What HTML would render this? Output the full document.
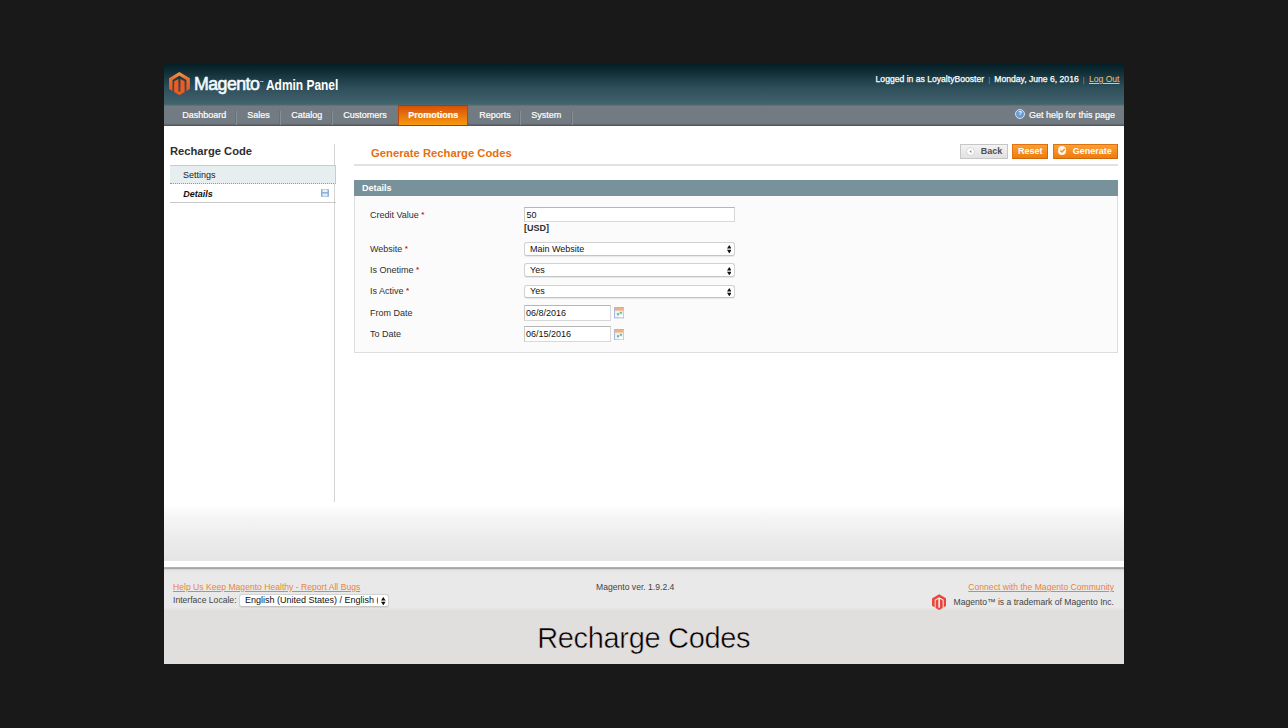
<!DOCTYPE html>
<html lang="en">
<head>
<meta charset="utf-8">
<title>Recharge Codes</title>
<style>
*{box-sizing:border-box;margin:0;padding:0}
html,body{width:1288px;height:728px;overflow:hidden;background:#191919}
body{font-family:"Liberation Sans",sans-serif;font-size:9px;color:#2f2f2f;position:relative}
.abs{position:absolute}
#panel{position:absolute;left:164px;top:65px;width:960px;height:599px;background:#fff}
#hdr{position:absolute;left:0;top:-1.3px;width:960px;height:42.3px;background:linear-gradient(#061f26 0%,#0c272f 12%,#1a3a43 32%,#2d4f5a 56%,#3a5965 78%,#3e636b 92%,#3d626a 100%)}
#nav{position:absolute;left:0;top:38.7px;width:960px;height:22px;background:linear-gradient(#3d626a 0,#727a82 2.3px,#727a82 19.3px,#6a7076 20px,#4b5054 22px)}
.t{position:absolute;white-space:nowrap;line-height:1}
.nv{color:#fff;font-size:9px;top:7.7px;-webkit-text-stroke:.2px #fff;margin-left:.3px}
.sep{position:absolute;top:7.3px;width:1px;height:14.5px;background:#868f96;box-shadow:-1px 0 0 #666f76}

.lb{color:#2f2f2f;font-size:9px}
.rq{color:#c41e2e;font-weight:bold;font-size:8px;position:relative;top:-1px}
.inp{background:#fff;border:1px solid #d8d8d8;border-top-color:#b6b6b6;border-left-color:#cccccc}
.sel{background:#fff;border:1px solid #d2d2d2;border-bottom-color:#c4c4c4;border-radius:3px;box-shadow:0 .5px .8px rgba(0,0,0,.08)}
</style>
</head>
<body>
<div id="panel">
  <div id="hdr"></div>
  <div class="abs" style="left:0;top:0;width:960px;height:41px">
    <svg class="abs" style="left:5.3px;top:7px" width="20.9" height="23.1" viewBox="0 0 20.9 23.1">
      <defs><linearGradient id="lg" x1="0" y1="0" x2="0" y2="1"><stop offset="0" stop-color="#f49a4c"/><stop offset=".35" stop-color="#ee6e2c"/><stop offset="1" stop-color="#ea5520"/></linearGradient></defs>
      <path d="M10.4 0 L20.9 6.2 V16.9 L17.4 18.9 V7.9 L10.4 3.8 L3.5 7.9 V18.9 L0 16.9 V6.2 Z" fill="url(#lg)"/>
      <path d="M5.1 9.3 L9.4 6.9 V19.3 L10.4 19.9 L11.4 19.3 V6.9 L15.6 9.3 V20.1 L10.4 23.1 L5.1 20.1 Z" fill="#ee5a1f"/>
    </svg>
    <div class="t" style="left:30.4px;top:9px;font-size:19px;color:#f4fbff;letter-spacing:-0.6px;transform:scaleX(.935);transform-origin:0 0;-webkit-text-stroke:.6px #f4fbff">Magento</div>
    <div class="t" style="left:95.7px;top:15.5px;font-size:2.5px;color:#fff;font-weight:bold">TM</div>
    <div class="t" style="left:102.1px;top:13px;font-size:14.3px;color:#fff;font-weight:bold;transform:scaleX(.835);transform-origin:0 0">Admin Panel</div>
    <div class="t" style="right:4.5px;top:10px;font-size:8.6px;color:#fff"><b style="font-weight:normal;-webkit-text-stroke:.25px #fff">Logged in as LoyaltyBooster</b><span style="color:#7f959f;padding:0 4px;font-size:7.5px;position:relative;top:-.5px;margin:0 .15px">|</span><b style="font-weight:normal;-webkit-text-stroke:.25px #fff">Monday, June 6, 2016</b><span style="color:#7f959f;padding:0 4px;font-size:7.5px;position:relative;top:-.5px;margin:0 .15px">|</span><span style="color:#f3c26c;text-decoration:underline">Log Out</span></div>
  </div>
  <div id="nav">
    <div class="t nv" style="left:18px">Dashboard</div><div class="sep" style="left:72px"></div>
    <div class="t nv" style="left:83px">Sales</div><div class="sep" style="left:116px"></div>
    <div class="t nv" style="left:127px">Catalog</div><div class="sep" style="left:168px"></div>
    <div class="t nv" style="left:179px">Customers</div>
    <div class="abs" style="left:234px;top:1.3px;width:70.2px;height:20.3px;background:linear-gradient(#d8500a,#f7990f);border:1px solid #b8480c;border-top-color:#8f4412;border-bottom:none"></div>
    <div class="t nv" style="left:244px;font-weight:bold">Promotions</div>
    <div class="t nv" style="left:315px">Reports</div><div class="sep" style="left:356px"></div>
    <div class="t nv" style="left:367px">System</div><div class="sep" style="left:408px"></div>
    <div class="t nv" style="right:9px">Get help for this page</div>
    <div class="abs" style="left:850.9px;top:5.2px;width:10.2px;height:10.2px;border-radius:50%;background:#6c9bd1;border:1.7px solid #d3e2f5;color:#fff;font-size:6px;line-height:6.8px;text-align:center;font-weight:bold">?</div>
  </div>

  <!-- sidebar -->
  <div class="t" style="left:6px;top:80.8px;font-size:11.2px;font-weight:bold;color:#2f2f2f">Recharge Code</div>
  <div class="abs" style="left:169.7px;top:79.3px;width:1.3px;height:357.7px;background:#d3d3d3"></div>
  <div class="abs" style="left:5.6px;top:100px;width:166.4px;height:19px;background:#e7eef0;border-top:1px solid #c5cdd0;border-bottom:1px dotted #8a9aa0;border-right:1px solid #c5cdd0"></div>
  <div class="t" style="left:19px;top:105.7px;font-size:9px;color:#1a1a1a">Settings</div>
  <div class="abs" style="left:5.6px;top:137px;width:166.4px;height:1px;background:#c9c9c9"></div>
  <div class="t" style="left:19.3px;top:124.5px;font-size:9px;font-weight:bold;font-style:italic;color:#111">Details</div>
  <svg class="abs" style="left:157px;top:124px" width="8" height="8" viewBox="0 0 8 8"><rect x="0" y="0" width="8" height="8" rx="1" fill="#8fb0d6"/><rect x="1.5" y="0.5" width="5" height="2.5" fill="#eaf1f9"/><rect x="1.5" y="4.5" width="5" height="3" fill="#dfe9f5"/></svg>

  <!-- content header -->
  <div class="t" style="left:207px;top:82.5px;font-size:11.25px;font-weight:bold;color:#e76f10">Generate Recharge Codes</div>
  <div class="abs" style="left:190px;top:99px;width:764px;height:2px;background:#e2e2e2"></div>
  <div class="abs btn" style="left:796px;top:78.8px;width:48px;height:15px;background:linear-gradient(#f3f3f3,#e1e1e1);border:1px solid #c6c6c6"></div>
  <div class="abs" style="left:801.8px;top:82px;width:9px;height:9px;border-radius:50%;background:#fdfdfd;border:1px solid #d6d6d6"></div>
  <svg class="abs" style="left:801.8px;top:82px" width="9" height="9" viewBox="0 0 9 9"><path d="M3.4 4.5 L5.4 3.1 V5.9 Z" fill="#8a8a8a"/></svg>
  <div class="t" style="left:816.8px;top:81.5px;font-size:9px;font-weight:bold;color:#4e4e4e">Back</div>
  <div class="abs" style="left:848.1px;top:78.8px;width:36.1px;height:15px;background:linear-gradient(#fba033,#f17b0c);border:1px solid #dc7412;border-right-color:#c9680e;border-bottom-color:#cc690e"></div>
  <div class="t" style="left:854px;top:81.5px;font-size:9px;font-weight:bold;color:#fff">Reset</div>
  <div class="abs" style="left:888.5px;top:78.8px;width:65.2px;height:15px;background:linear-gradient(#fba033,#f17b0c);border:1px solid #dc7412;border-right-color:#c9680e;border-bottom-color:#cc690e"></div>
  <div class="abs" style="left:893.8px;top:81.3px;width:8.6px;height:8.6px;border-radius:50%;background:#fff5ea"></div>
  <svg class="abs" style="left:893.6px;top:81.1px" width="9" height="9" viewBox="0 0 9 9"><path d="M2.4 4.6 L4 6.1 L6.7 3" stroke="#ee8a2a" stroke-width="1.35" fill="none"/></svg>
  <div class="t" style="left:908.8px;top:81.5px;font-size:9px;font-weight:bold;color:#fff">Generate</div>

  <!-- fieldset -->
  <div class="abs" style="left:190px;top:115px;width:764px;height:16px;background:#77929b"></div>
  <div class="t" style="left:198px;top:118.5px;font-size:9px;font-weight:bold;color:#fff">Details</div>
  <div class="abs" style="left:190px;top:131px;width:764px;height:157px;background:#fbfbfb;border:1px solid #dedede;border-top:none"></div>

  <div class="t lb" style="left:206px;top:146px">Credit Value <span class="rq">*</span></div>
  <div class="abs inp" style="left:360px;top:142px;width:211px;height:15px"></div>
  <div class="t" style="left:362.5px;top:146px;color:#111">50</div>
  <div class="t" style="left:360px;top:159px;font-weight:bold;color:#2f2f2f">[USD]</div>

  <div class="t lb" style="left:206px;top:179.5px">Website <span class="rq">*</span></div>
  <div class="abs sel" style="left:360px;top:177.1px;width:211px;height:13.6px"><svg class="abs" style="right:2.6px;top:2.2px" width="4.6" height="8.4" viewBox="0 0 4.6 8.4"><path d="M2.3 0 L4.6 3.6 H0 Z M2.3 8.4 L4.6 4.8 H0 Z" fill="#111"/></svg></div>
  <div class="t" style="left:366px;top:179.5px;color:#111">Main Website</div>

  <div class="t lb" style="left:206px;top:200.5px">Is Onetime <span class="rq">*</span></div>
  <div class="abs sel" style="left:360px;top:198.4px;width:211px;height:13.6px"><svg class="abs" style="right:2.6px;top:2.2px" width="4.6" height="8.4" viewBox="0 0 4.6 8.4"><path d="M2.3 0 L4.6 3.6 H0 Z M2.3 8.4 L4.6 4.8 H0 Z" fill="#111"/></svg></div>
  <div class="t" style="left:366px;top:200.5px;color:#111">Yes</div>

  <div class="t lb" style="left:206px;top:222px">Is Active <span class="rq">*</span></div>
  <div class="abs sel" style="left:360px;top:219.9px;width:211px;height:13.6px"><svg class="abs" style="right:2.6px;top:2.2px" width="4.6" height="8.4" viewBox="0 0 4.6 8.4"><path d="M2.3 0 L4.6 3.6 H0 Z M2.3 8.4 L4.6 4.8 H0 Z" fill="#111"/></svg></div>
  <div class="t" style="left:366px;top:222px;color:#111">Yes</div>

  <div class="t lb" style="left:206px;top:244px">From Date</div>
  <div class="abs inp" style="left:360px;top:240px;width:87px;height:15.5px"></div>
  <div class="t" style="left:362px;top:243.5px;color:#111">06/8/2016</div>

  <svg class="abs" style="left:449.8px;top:242.3px" width="10.4" height="11.4" viewBox="0 0 10.4 11.4"><rect x="0.5" y="0.5" width="9.4" height="10.4" fill="#e8f0f9" stroke="#a9b9dc"/><rect x="1" y="1" width="8.4" height="2.6" fill="#f3b07e"/><rect x="3" y="6.2" width="2" height="2" fill="#74b878"/><rect x="5.8" y="4.8" width="2" height="2" fill="#74b878"/><rect x="5.5" y="8" width="3.4" height="2.2" fill="#fff"/></svg><svg class="abs" style="left:449.8px;top:263.8px" width="10.4" height="11.4" viewBox="0 0 10.4 11.4"><rect x="0.5" y="0.5" width="9.4" height="10.4" fill="#e8f0f9" stroke="#a9b9dc"/><rect x="1" y="1" width="8.4" height="2.6" fill="#f3b07e"/><rect x="3" y="6.2" width="2" height="2" fill="#74b878"/><rect x="5.8" y="4.8" width="2" height="2" fill="#74b878"/><rect x="5.5" y="8" width="3.4" height="2.2" fill="#fff"/></svg><div class="t lb" style="left:206px;top:265px">To Date</div>
  <div class="abs inp" style="left:360px;top:261px;width:87px;height:15.5px"></div>
  <div class="t" style="left:362px;top:264.5px;color:#111">06/15/2016</div>

  <!-- bottom -->
  <div class="abs" style="left:0;top:439px;width:960px;height:57px;background:linear-gradient(#ffffff 0%,#f4f4f4 28%,#ebebeb 65%,#e5e5e5 100%)"></div>
  <div class="abs" style="left:0;top:496px;width:960px;height:6px;background:#fff"></div>
  <div class="abs" style="left:0;top:502px;width:960px;height:1.5px;background:linear-gradient(#b4b4b4,#a2a2a2)"></div>
  <div class="abs" style="left:0;top:503.5px;width:960px;height:42px;background:linear-gradient(#cfcfcf 0,#e4e4e4 1.5px,#e9e9e9 4px,#e9e9e9 38px,#e3e2e1 41px,#e0dfde 42px)"></div>
  <div class="abs" style="left:0;top:545px;width:960px;height:54px;background:#e0dfde"></div>

  <div class="t" style="left:9px;top:518px;font-size:8.6px;color:#e8853a;text-decoration:underline">Help Us Keep Magento Healthy - Report All Bugs</div>
  <div class="t" style="left:9px;top:530.5px;font-size:8.6px;color:#444">Interface Locale:</div>
  <div class="abs sel" style="left:75.2px;top:528.8px;width:150.2px;height:13.4px"><svg class="abs" style="right:2.6px;top:2.2px" width="4.6" height="8.4" viewBox="0 0 4.6 8.4"><path d="M2.3 0 L4.6 3.6 H0 Z M2.3 8.4 L4.6 4.8 H0 Z" fill="#111"/></svg></div>
  <div class="t" style="left:81px;top:531px;font-size:9px;color:#111;width:133px;overflow:hidden">English (United States) / English (United States)</div>
  <div class="t" style="left:432px;top:518px;font-size:8.6px;color:#444">Magento ver. 1.9.2.4</div>
  <div class="t" style="right:10px;top:518px;font-size:8.6px;color:#e8853a;text-decoration:underline">Connect with the Magento Community</div>
  <div class="t" style="right:10px;top:533px;font-size:8.6px;color:#444">Magento™ is a trademark of Magento Inc.</div>
  <svg class="abs" style="left:767.7px;top:528.7px" width="14.4" height="16.3" viewBox="0 0 20.9 23.1">
      <path d="M10.4 0 L20.9 6.2 V16.9 L17 19.1 V8.1 L10.4 4.3 L3.9 8.1 V19.1 L0 16.9 V6.2 Z" fill="#e9473d"/>
      <path d="M5.3 9.3 L9.2 7 V19.2 L10.4 19.9 L11.6 19.2 V7 L15.5 9.3 V20.1 L10.4 23.1 L5.3 20.1 Z" fill="#e9473d"/>
  </svg>

  <div class="t" style="left:-.3px;width:960px;text-align:center;top:559px;font-size:29px;letter-spacing:-.33px;color:#000;-webkit-text-stroke:.5px #e0dfde">Recharge Codes</div>
</div>
</body>
</html>
